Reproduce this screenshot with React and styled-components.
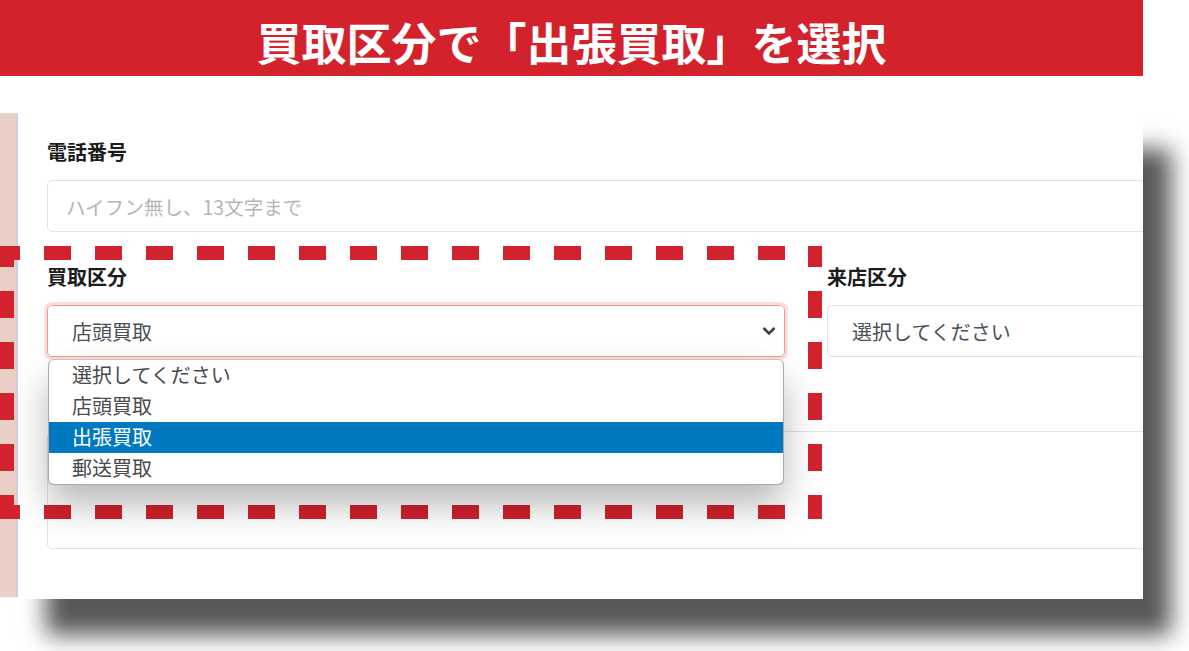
import React from 'react'
import styled, { createGlobalStyle } from 'styled-components'

const GlobalStyle = createGlobalStyle`
  html, body {
    margin: 0;
    padding: 0;
    background: #ffffff;
    overflow: hidden;
  }
  body {
    font-family: "Noto Sans CJK JP", "Noto Sans", sans-serif;
  }
`

const Page = styled.div`
  width: 1189px;
  height: 651px;
`

const Banner = styled.div`
  width: 1143px;
  height: 76px;
  background: #d3222c;
  display: flex;
  align-items: center;
  justify-content: center;
`

const Title = styled.h1`
  margin: 0;
  color: #ffffff;
  font-size: 45px;
  font-weight: 700;
  line-height: 1;
  padding-top: 6px;
`

const Stage = styled.div`
  position: relative;
  margin-top: 37px;
  display: flex;
`

const SideStrip = styled.div`
  width: 16px;
  height: 484px;
  background: #e9cfc5;
  border-right: 2px solid #c9d2de;
`

const Panel = styled.div`
  width: 1125px;
  height: 486px;
  background: #ffffff;
  overflow: hidden;
  box-shadow: 28px 36px 22px #595758;
`

const Form = styled.div`
  width: 1200px;
  padding: 27px 0 0 29px;
  display: flex;
  flex-direction: column;
  gap: 33px;
`

const Field = styled.div`
  position: relative;
  display: flex;
  flex-direction: column;
  padding-top: ${p => p.$offset || 0}px;
`

const Label = styled.label`
  font-size: 20px;
  font-weight: 700;
  line-height: 24px;
  color: #1c1c1c;
  margin-bottom: 16px;
`

const Row = styled.div`
  display: grid;
  grid-template-columns: 738px 1fr;
  column-gap: 42px;
`

const TextInput = styled.div`
  box-sizing: border-box;
  height: 52px;
  border: 1px solid #dfe3e8;
  border-radius: 5px;
  padding-left: 18px;
  display: flex;
  align-items: center;
  font-size: 19.5px;
  color: #b3b6ba;
`

const SelectBox = styled.div`
  box-sizing: border-box;
  height: 52px;
  border: 1px solid ${p => (p.$focused ? '#ee9d8b' : '#dfe3e8')};
  border-radius: 5px;
  padding: 0 8px 0 24px;
  display: flex;
  align-items: center;
  justify-content: space-between;
  font-size: 20px;
  color: #4a5057;
  box-shadow: ${p => (p.$focused ? '0 0 0 3px rgba(240, 150, 130, 0.3)' : 'none')};
`

const Dropdown = styled.ul`
  position: absolute;
  top: calc(100% + 2px);
  left: 1px;
  width: 734px;
  margin: 0;
  padding: 0;
  list-style: none;
  background: #ffffff;
  border: 1px solid #a9a9a9;
  border-top-color: #c4c4c4;
  border-radius: 6px;
  overflow: hidden;
  box-shadow: 0 20px 36px rgba(0, 0, 0, 0.28);
  z-index: 2;
`

const Option = styled.li`
  height: 31px;
  line-height: 29px;
  padding-left: 23px;
  font-size: 20px;
  color: ${p => (p.$selected ? '#ffffff' : '#4a4a4a')};
  background: ${p => (p.$selected ? '#0079c1' : 'transparent')};
`

const TextArea = styled.div`
  box-sizing: border-box;
  height: 118px;
  border: 1px solid #dfe3e8;
  border-radius: 5px;
`

const Highlight = styled.svg`
  position: absolute;
  left: 0;
  top: 133px;
  pointer-events: none;
`

function Chevron () {
  return (
    <svg width='14' height='10' viewBox='0 0 14 10'>
      <polyline points='1.5,2 7,7.5 12.5,2' fill='none' stroke='#3a4047' strokeWidth='2.6' />
    </svg>
  )
}

const options = ['選択してください', '店頭買取', '出張買取', '郵送買取']

function App () {
  return (
    <Page>
      <GlobalStyle />
      <Banner>
        <Title>買取区分で「出張買取」を選択</Title>
      </Banner>
      <Stage>
        <SideStrip />
        <Panel>
          <Form>
            <Field>
              <Label>電話番号</Label>
              <TextInput>ハイフン無し、13文字まで</TextInput>
            </Field>
            <Row>
              <Field>
                <Label>買取区分</Label>
                <SelectBox $focused>
                  <span>店頭買取</span>
                  <Chevron />
                </SelectBox>
                <Dropdown>
                  {options.map(o => (
                    <Option key={o} $selected={o === '出張買取'}>{o}</Option>
                  ))}
                </Dropdown>
              </Field>
              <Field>
                <Label>来店区分</Label>
                <SelectBox>
                  <span>選択してください</span>
                </SelectBox>
              </Field>
            </Row>
            <Field $offset={41}>
              <TextArea />
            </Field>
          </Form>
        </Panel>
        <Highlight width='822' height='273' viewBox='0 0 822 273'>
          <g stroke='#d2222d' strokeWidth='14' strokeDasharray='27 24'>
            <line x1='0' y1='7' x2='822' y2='7' strokeDashoffset='7' />
            <line x1='0' y1='266' x2='822' y2='266' strokeDashoffset='7' />
            <line x1='7' y1='0' x2='7' y2='273' strokeDashoffset='6' />
            <line x1='815' y1='0' x2='815' y2='273' strokeDashoffset='6' />
          </g>
        </Highlight>
      </Stage>
    </Page>
  )
}

export default App
